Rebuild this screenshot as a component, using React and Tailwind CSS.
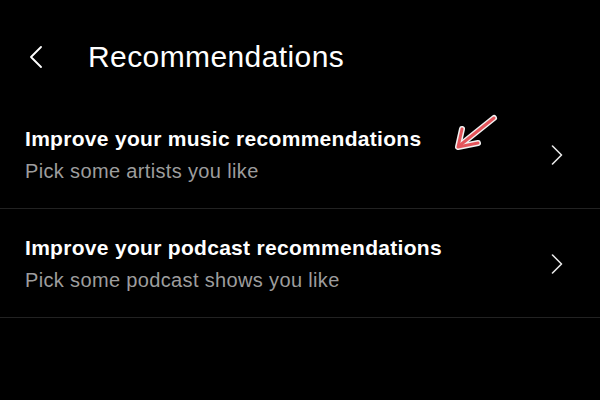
import React from "react";

const items = [
  { title: "Improve your music recommendations", sub: "Pick some artists you like" },
  { title: "Improve your podcast recommendations", sub: "Pick some podcast shows you like" },
];

function RedArrow() {
  return (
    <svg className="absolute left-[452px] top-[112px]" width="48" height="42" viewBox="0 0 48 42" fill="none">
      <g stroke="#f2f2f2" strokeWidth="6" strokeLinecap="round" strokeLinejoin="round">
        <path d="M42 6 L7 34" />
        <path d="M10 17 L6 35 L26 31" />
      </g>
      <g stroke="#e4555b" strokeWidth="3" strokeLinecap="round" strokeLinejoin="round">
        <path d="M42 6 L7 34" />
        <path d="M10 17 L6 35 L26 31" />
      </g>
    </svg>
  );
}

export default function App() {
  return (
    <div className="relative w-[600px] h-[400px] bg-black text-white overflow-hidden font-['Liberation_Sans',Arial,sans-serif]">
      {/* Header */}
      <div className="h-[100px] flex items-center pt-[14px]">
        <svg width="14" height="22" viewBox="0 0 14 22" fill="none" className="ml-[29px]">
          <path d="M12 1 L2 11 L12 21" stroke="#fff" strokeWidth="1.8" strokeLinecap="round" strokeLinejoin="round" />
        </svg>
        <h1 className="ml-[45px] text-[30px] leading-none tracking-[0.4px]">Recommendations</h1>
      </div>

      {items.map((it) => (
        <div key={it.title} className="h-[109px] border-b border-[#222] flex items-center pl-[25px] pr-[37px]">
          <div className="flex-1 flex flex-col gap-[7px] pt-[2px]">
            <div className="text-[21px] font-bold leading-tight tracking-[0.3px]">{it.title}</div>
            <div className="text-[20px] text-[#9d9d9d] leading-tight tracking-[0.35px]">{it.sub}</div>
          </div>
          <svg width="12" height="20" viewBox="0 0 12 20" fill="none" className="mt-[1px]">
            <path d="M1.5 1 L10.5 10 L1.5 19" stroke="#e8e8e8" strokeWidth="1.6" strokeLinecap="round" strokeLinejoin="round" />
          </svg>
        </div>
      ))}

      <RedArrow />
    </div>
  );
}
